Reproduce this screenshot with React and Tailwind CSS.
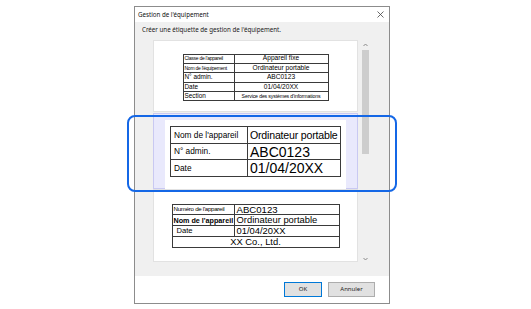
const cell = 'border border-[#3a3a3a] p-0 leading-none whitespace-nowrap'

function ClassTable() {
  const rows = [
    ['Classe de l\'appareil', 'Appareil fixe', true, false],
    ['Nom de l\'équipement', 'Ordinateur portable', true, false],
    ['N° admin.', 'ABC0123', false, false],
    ['Date', '01/04/20XX', false, false],
    ['Section', 'Service des systèmes d\'informations', false, true],
  ]
  return (
    <table className="mt-[3px] border-collapse border border-[#333] text-black">
      <tbody>
        {rows.map(([k, v, smallK, smallV]) => (
          <tr key={k} className="h-[9.4px]">
            <td className={`${cell} w-[51px] pl-[1px] ${smallK ? 'text-[5px] tracking-[-0.25px]' : 'text-[6.4px]'}`}>{k}</td>
            <td className={`${cell} w-[94px] text-center ${smallV ? 'text-[5.2px] tracking-[-0.15px]' : 'text-[6.6px]'}`}>{v}</td>
          </tr>
        ))}
      </tbody>
    </table>
  )
}

function DeviceTable() {
  return (
    <table className="border-collapse border border-[#222] text-black">
      <tbody>
        <tr className="h-[16.7px]">
          <td className={`${cell} w-[77px] pl-[3px] text-[8.3px]`}>Nom de l'appareil</td>
          <td className={`${cell} w-[93px] pl-[2px] text-[10.6px] tracking-[-0.2px]`}>Ordinateur portable</td>
        </tr>
        <tr className="h-[16.7px]">
          <td className={`${cell} pl-[3px] text-[8.3px]`}>N° admin.</td>
          <td className={`${cell} pl-[2px] text-[14px]`}>ABC0123</td>
        </tr>
        <tr className="h-[16.7px]">
          <td className={`${cell} pl-[3px] text-[8.3px]`}>Date</td>
          <td className={`${cell} pl-[2px] text-[14px]`}>01/04/20XX</td>
        </tr>
      </tbody>
    </table>
  )
}

function NumberTable() {
  return (
    <table className="border-collapse border border-[#333] text-black">
      <tbody>
        <tr className="h-[10.75px]">
          <td className={`${cell} w-[62px] pl-[1px] text-[6.2px] tracking-[-0.3px]`}>Numéro de l'appareil</td>
          <td className={`${cell} w-[105px] pl-[2px] text-[9.6px]`}>ABC0123</td>
        </tr>
        <tr className="h-[10.75px]">
          <td className={`${cell} pl-[1px] text-[7.2px] font-semibold`}>Nom de l'appareil</td>
          <td className={`${cell} pl-[2px] text-[9.4px]`}>Ordinateur portable</td>
        </tr>
        <tr className="h-[10.75px]">
          <td className={`${cell} pl-[4px] text-[7.6px]`}>Date</td>
          <td className={`${cell} pl-[2px] text-[9.4px]`}>01/04/20XX</td>
        </tr>
        <tr className="h-[10.75px]">
          <td colSpan={2} className={`${cell} text-center text-[9.4px]`}>XX Co., Ltd.</td>
        </tr>
      </tbody>
    </table>
  )
}

function Scrollbar() {
  return (
    <div className="flex w-[9px] flex-col items-center">
      <svg width="7" height="6" viewBox="0 0 7 6" className="mt-[2px]">
        <path d="M1.5 4 L3.5 2 L5.5 4" fill="none" stroke="#8a8a8a" strokeWidth="1" />
      </svg>
      <div className="mt-[2px] h-[104px] w-[7px] bg-[#cdcdcd]" />
      <div className="flex-1" />
      <svg width="7" height="6" viewBox="0 0 7 6" className="mb-[3px]">
        <path d="M1.5 2 L3.5 4 L5.5 2" fill="none" stroke="#8a8a8a" strokeWidth="1" />
      </svg>
    </div>
  )
}

export default function App() {
  return (
    <div
      className="relative h-[309px] w-[531px] overflow-hidden bg-white"
      style={{ fontFamily: '"Liberation Sans", Arial, sans-serif' }}
    >
      <div className="pl-[134px] pt-[6px]">
        <div className="flex h-[298px] w-[256px] flex-col border border-[#8c8c8c] bg-white">
          <div
            className="flex h-[15px] items-center justify-between pl-[3px] pr-[5px] text-[6.2px] text-[#111]"
            style={{ fontFamily: '"Noto Sans", sans-serif' }}
          >
            <span>Gestion de l'équipement</span>
            <svg width="7" height="7" viewBox="0 0 7 7">
              <path d="M0.5 0.5 L6.5 6.5 M6.5 0.5 L0.5 6.5" stroke="#444" strokeWidth="0.8" />
            </svg>
          </div>

          <div className="flex flex-1 flex-col bg-[#f0f0f0]">
            <p
              className="pl-[7px] pt-[3px] text-[6.2px] leading-[9px] text-[#222]"
              style={{ fontFamily: '"Noto Sans", sans-serif' }}
            >
              Créer une étiquette de gestion de l'équipement.
            </p>
            <div className="ml-[18px] mt-[6px] flex h-[225px] w-[217px]">
              <div className="flex w-[205px] flex-col">
                <div className="flex h-[72px] items-center justify-center border border-[#e2e2e2] bg-white">
                  <ClassTable />
                </div>
                <div className="mt-[1px] h-[76px] border border-[#c9c9f2] bg-[#e9e9fc] px-[11px] pt-[6px]">
                  <div className="flex h-[69px] items-start justify-center bg-white pt-[6px]">
                    <DeviceTable />
                  </div>
                </div>
                <div className="flex h-[73px] items-center justify-center border border-[#e2e2e2] bg-white">
                  <NumberTable />
                </div>
              </div>
              <div className="w-[3px]" />
              <Scrollbar />
            </div>
          </div>

          <div
            className="flex h-[27px] items-center justify-end gap-[6px] pr-[14px] text-[6px] text-[#222]"
            style={{ fontFamily: '"Noto Sans", sans-serif' }}
          >
            <button className="h-[15px] w-[38px] border border-[#0078d7] bg-[#e1e1e1]">OK</button>
            <button className="h-[15px] w-[47px] border border-[#adadad] bg-[#e1e1e1]">Annuler</button>
          </div>
        </div>
      </div>

      <div className="pointer-events-none absolute left-[127px] top-[115px] h-[77px] w-[270px] rounded-[8px] border-2 border-[#1467e6]" />
    </div>
  )
}
